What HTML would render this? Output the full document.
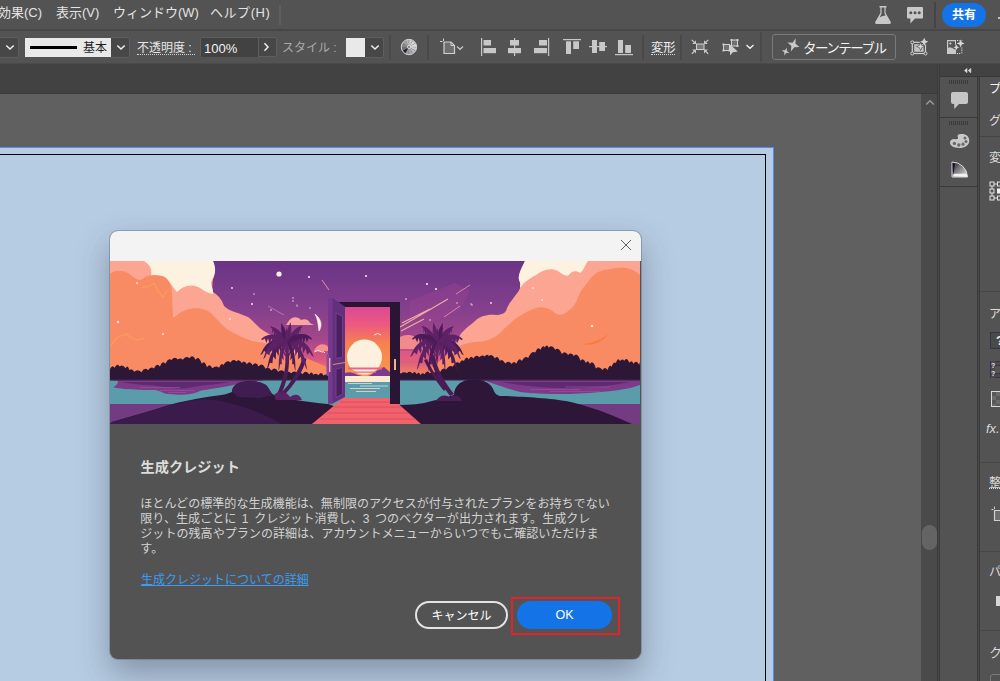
<!DOCTYPE html>
<html lang="ja">
<head>
<meta charset="utf-8">
<title>Illustrator</title>
<style>
html,body{margin:0;padding:0;}
body{width:1000px;height:681px;overflow:hidden;position:relative;background:#535353;
 font-family:"Liberation Sans","Noto Sans CJK JP",sans-serif;color:#e6e6e6;}
.abs{position:absolute;}
#root{position:absolute;left:0;top:0;width:1000px;height:681px;overflow:hidden;background:#535353;}
/* menu bar */
.menu{position:absolute;top:1.5px;height:22px;line-height:22px;font-size:13px;color:#e4e4e4;white-space:nowrap;}
.vsep{position:absolute;width:2px;margin-left:-1px;background:#494949;}
/* control bar */
.ddbtn{position:absolute;top:37px;height:18.5px;background:#474747;border:1px solid #5e5e5e;box-sizing:content-box;border-radius:0 2px 2px 0;}
.lbl{position:absolute;white-space:nowrap;font-size:12px;line-height:16px;}
.ic{position:absolute;overflow:visible;}
/* dialog */
#dlg{position:absolute;left:110px;top:231px;width:531px;height:428px;border-radius:8px;background:#535353;
 box-shadow:0 0 0 1px rgba(90,100,115,.4),0 14px 32px 0 rgba(45,50,60,.37);overflow:hidden;}
#dlg .tb{position:absolute;left:0;top:0;width:531px;height:30px;background:#f3f3f3;}
#dlg .img{position:absolute;left:0;top:30px;width:530px;height:163px;}
#dlg h1{position:absolute;left:30.5px;top:227px;margin:0;font-size:14.2px;line-height:18px;font-weight:bold;color:#dcdcdc;white-space:nowrap;}
#dlg p{position:absolute;left:30.3px;top:266px;margin:0;font-size:12.07px;line-height:15px;color:#d2d2d2;white-space:nowrap;}
#dlg a{position:absolute;left:31px;top:340.5px;font-size:12px;line-height:16px;color:#3a9cf2;text-decoration:underline;white-space:nowrap;}
.btn{position:absolute;box-sizing:border-box;height:28px;border-radius:14px;text-align:center;font-size:13px;white-space:nowrap;}
</style>
</head>
<body>
<div id="root">

<!-- ===== MENU BAR ===== -->
<div class="menu" style="left:-2px;">効果(C)</div>
<div class="menu" style="left:56px;">表示(V)</div>
<div class="menu" style="left:113px;">ウィンドウ(W)</div>
<div class="menu" style="left:210px;letter-spacing:.55px;">ヘルプ(H)</div>
<div class="vsep" style="left:280px;top:5px;height:20px;background:#5e5e5e;"></div>
<div class="vsep" style="left:935px;top:2px;height:26px;background:#444;"></div>
<div class="abs" style="left:942px;top:3px;width:44px;height:24px;border-radius:12px;background:#1473e6;color:#fff;font-weight:bold;font-size:12px;line-height:24px;text-align:center;">共有</div>

<!-- flask -->
<svg class="ic" style="left:874px;top:5px;" width="18" height="20" viewBox="0 0 18 20">
 <path d="M5.5 1 H12.5 V2.6 H11.6 V8 L16.8 17 Q17.3 19 15.6 19 H2.4 Q0.7 19 1.2 17 L6.4 8 V2.6 H5.5 Z" fill="#c8c8c8"/>
 <path d="M7.6 2.6 H10.4 V8.4 L11.6 10.6 Q8.6 10.8 5.8 12.2 L7.6 8.4 Z" fill="#535353"/>
</svg>
<!-- chat -->
<svg class="ic" style="left:906px;top:6px;" width="18" height="19" viewBox="0 0 18 19">
 <path d="M2 1 H16 Q17 1 17 2 V11.6 Q17 12.6 16 12.6 H9 L4.4 17.6 V12.6 H2 Q1 12.6 1 11.6 V2 Q1 1 2 1 Z" fill="#c8c8c8"/>
 <g fill="#535353"><circle cx="4.8" cy="6.8" r="1.5"/><circle cx="9" cy="6.8" r="1.5"/><circle cx="13.2" cy="6.8" r="1.5"/></g>
</svg>
<div class="abs" style="left:998px;top:17px;width:3px;height:2px;background:#c0c0c0;"></div>
<!-- gen icons in control bar -->
<svg class="ic" style="left:905px;top:32px;" width="65" height="30" viewBox="905 32 65 30">
 <rect x="912.300" y="42.300" width="13.200" height="11.200" fill="none" stroke="#cfcfcf" stroke-width="1.200"/>
 <rect x="914.200" y="44.200" width="9.400" height="7.600" fill="#c2c2c2"/>
 <path d="M924.20 37.70 L925.42 40.58 L928.30 41.80 L925.42 43.02 L924.20 45.90 L922.98 43.02 L920.10 41.80 L922.98 40.58 Z" fill="#d6d6d6" stroke="#535353" stroke-width="1.200" paint-order="stroke"/>
 <path d="M920.60 43.20 L921.58 45.52 L923.90 46.50 L921.58 47.48 L920.60 49.80 L919.62 47.48 L917.30 46.50 L919.62 45.52 Z" fill="#d6d6d6" stroke="#535353" stroke-width="1.200" paint-order="stroke"/>
 <g fill="#535353" stroke="#cfcfcf" stroke-width="1"><circle cx="912.300" cy="42.300" r="1.500"/><circle cx="912.300" cy="53.500" r="1.500"/><circle cx="925.500" cy="53.500" r="1.500"/></g>
 <rect x="947" y="40" width="9" height="14" fill="#c8c8c8"/>
 <path d="M948.200 41.200 H955 V50 Q954.300 48.300 953 48.800 Q952.600 47.200 951.200 47.800 Q950.400 46.600 949.400 47.600 Q948.800 47.200 948.200 48 Z" fill="#555"/>
 <path d="M950.30 42.00 L950.78 43.12 L951.90 43.60 L950.78 44.08 L950.30 45.20 L949.82 44.08 L948.70 43.60 L949.82 43.12 Z" fill="#cfcfcf"/>
 <path d="M957 40.500 H963 M961.800 47.500 V54 M957 53.500 H961" fill="none" stroke="#dcdcdc" stroke-width="1.100" stroke-dasharray="1.100 1"/>
 <path d="M960.60 39.40 L961.79 42.21 L964.60 43.40 L961.79 44.59 L960.60 47.40 L959.41 44.59 L956.60 43.40 L959.41 42.21 Z" fill="#d8d8d8" stroke="#535353" stroke-width="1" paint-order="stroke"/>
 <path d="M956.40 44.40 L957.26 46.44 L959.30 47.30 L957.26 48.16 L956.40 50.20 L955.54 48.16 L953.50 47.30 L955.54 46.44 Z" fill="#d8d8d8" stroke="#535353" stroke-width="1" paint-order="stroke"/>
</svg>


<!-- separator menu / control -->
<div class="abs" style="left:0;top:29px;width:1000px;height:2px;background:#464646;"></div>

<!-- ===== CONTROL BAR ===== -->

<!-- left dropdown -->
<div class="ddbtn" style="left:-2px;width:19px;"></div>
<svg class="ic" style="left:5px;top:44px;" width="10" height="7" viewBox="0 0 10 7"><path d="M1.3 1.5 L5 5 L8.7 1.5" fill="none" stroke="#f0f0f0" stroke-width="1.5"/></svg>
<!-- stroke box -->
<div class="abs" style="left:25px;top:38px;width:86px;height:19px;background:#e9e9e9;"></div>
<div class="abs" style="left:30px;top:46px;width:47px;height:3px;background:#000;"></div>
<div class="lbl" style="left:83px;top:40px;font-size:12px;color:#1e1e1e;">基本</div>
<div class="ddbtn" style="left:111px;width:18px;border-left:none;"></div>
<svg class="ic" style="left:116px;top:44px;" width="10" height="7" viewBox="0 0 10 7"><path d="M1.3 1.5 L5 5 L8.7 1.5" fill="none" stroke="#f0f0f0" stroke-width="1.5"/></svg>
<!-- opacity -->
<div class="lbl" style="left:137px;top:40px;color:#e6e6e6;">不透明度 :</div>
<div class="abs" style="left:137px;top:54px;width:58px;height:0;border-top:1px dotted #d0d0d0;"></div>
<div class="abs" style="left:200px;top:37px;width:77px;height:20px;border:1px solid #5e5e5e;box-sizing:border-box;background:#474747;border-radius:2px;"></div>
<div class="abs" style="left:201px;top:38px;width:57px;height:19px;background:#424242;"></div>
<div class="abs" style="left:258px;top:38px;width:1px;height:19px;background:#5e5e5e;"></div>
<div class="lbl" style="left:204px;top:41px;color:#f2f2f2;font-size:13px;">100%</div>
<svg class="ic" style="left:263px;top:42px;" width="7" height="10" viewBox="0 0 7 10"><path d="M1.5 1.3 L5 5 L1.5 8.7" fill="none" stroke="#f0f0f0" stroke-width="1.5"/></svg>
<!-- style -->
<div class="lbl" style="left:282px;top:40px;color:#a9a9a9;">スタイル :</div>
<div class="abs" style="left:346px;top:38px;width:19px;height:19px;background:#e9e9e9;"></div>
<div class="ddbtn" style="left:365px;width:18px;border-left:none;"></div>
<svg class="ic" style="left:370px;top:44px;" width="10" height="7" viewBox="0 0 10 7"><path d="M1.3 1.5 L5 5 L8.7 1.5" fill="none" stroke="#f0f0f0" stroke-width="1.5"/></svg>
<div class="vsep" style="left:390px;top:35px;height:25px;"></div>
<!-- recolor wheel -->
<svg class="ic" style="left:400px;top:38px;" width="18" height="18" viewBox="0 0 18 18">
 <circle cx="9" cy="9" r="7.800" fill="#6c6c6c"/>
 <path d="M9 9 L9.26 1.60 A7.4 7.4 0 0 1 12.47 2.47 Z" fill="#c9c9c9"/>
 <path d="M9 9 L12.92 2.72 A7.4 7.4 0 0 1 15.28 5.08 Z" fill="#d8d8d8"/>
 <path d="M9 9 L15.53 5.53 A7.4 7.4 0 0 1 16.40 8.74 Z" fill="#e0e0e0"/>
 <path d="M9 9 L16.40 9.26 A7.4 7.4 0 0 1 15.53 12.47 Z" fill="#cfcfcf"/>
 <path d="M9 9 L15.28 12.92 A7.4 7.4 0 0 1 12.92 15.28 Z" fill="#bdbdbd"/>
 <path d="M9 9 L12.47 15.53 A7.4 7.4 0 0 1 9.26 16.40 Z" fill="#a8a8a8"/>
 <path d="M9 9 L8.74 16.40 A7.4 7.4 0 0 1 5.53 15.53 Z" fill="#9a9a9a"/>
 <path d="M9 9 L5.08 15.28 A7.4 7.4 0 0 1 2.72 12.92 Z" fill="#2a1a38"/>
 <path d="M9 9 L2.47 12.47 A7.4 7.4 0 0 1 1.60 9.26 Z" fill="#707070"/>
 <path d="M9 9 L1.60 8.74 A7.4 7.4 0 0 1 2.47 5.53 Z" fill="#8a8a8a"/>
 <path d="M9 9 L2.72 5.08 A7.4 7.4 0 0 1 5.08 2.72 Z" fill="#a2a2a2"/>
 <path d="M9 9 L5.53 2.47 A7.4 7.4 0 0 1 8.74 1.60 Z" fill="#b6b6b6"/>
 <circle cx="9" cy="9" r="7.700" fill="none" stroke="#d2d2d2" stroke-width="1"/>
 <circle cx="9" cy="9" r="1.700" fill="#8a8a8a" stroke="#dedede" stroke-width=".8"/>
</svg>
<div class="vsep" style="left:428px;top:35px;height:25px;"></div>
<!-- artboard icon -->
<svg class="ic" style="left:439px;top:38px;" width="26" height="18" viewBox="0 0 26 18">
 <path d="M4.5 0.5 V3 M1 3.5 H3.5" stroke="#d0d0d0" stroke-width="1" fill="none"/>
 <path d="M5 4 H12 L15.5 7.5 V15.5 H5 Z" fill="#6e6e6e" stroke="#d0d0d0" stroke-width="1.2"/>
 <path d="M12 4 V7.5 H15.5" fill="none" stroke="#d0d0d0" stroke-width="1"/>
 <path d="M18 8.5 L21 11.3 L24 8.5" fill="none" stroke="#c8c8c8" stroke-width="1.3"/>
</svg>
<!-- align icons -->
<svg class="ic" style="left:480px;top:37px;" width="160" height="20" viewBox="480 37 160 20" fill="#c8c8c8">
 <rect x="481" y="38" width="1.2" height="18"/><rect x="483.5" y="40" width="7.5" height="5.5"/><rect x="483.5" y="48" width="12.5" height="5.2"/>
 <rect x="514" y="38" width="1.2" height="18"/><rect x="510" y="40" width="9" height="5.5"/><rect x="508" y="48" width="13" height="5.2"/>
 <rect x="548" y="38" width="1.2" height="18"/><rect x="539" y="40" width="8" height="5.5"/><rect x="534" y="48" width="13" height="5.2"/>
 <rect x="563" y="39" width="18" height="1.2"/><rect x="566" y="41.3" width="5" height="12.7"/><rect x="573.2" y="41.3" width="5.8" height="7.7"/>
 <rect x="589" y="46" width="18" height="1.2"/><rect x="592" y="40" width="5" height="13"/><rect x="599.2" y="42" width="5.8" height="9"/>
 <rect x="615" y="54" width="18" height="1.2"/><rect x="618" y="40" width="5" height="13"/><rect x="625.2" y="45" width="5.8" height="8"/>
</svg>
<div class="vsep" style="left:643px;top:35px;height:25px;"></div>
<div class="lbl" style="left:651px;top:40px;color:#f0f0f0;font-size:12.3px;">変形</div>
<div class="abs" style="left:651px;top:54px;width:24px;height:0;border-top:1px dotted #d8d8d8;"></div>
<div class="vsep" style="left:681px;top:35px;height:25px;"></div>
<!-- isolate icon -->
<svg class="ic" style="left:691px;top:39px;" width="18" height="16" viewBox="0 0 18 16">
 <rect x="5.500" y="5" width="7.500" height="5.500" fill="#7a7a7a" stroke="#d0d0d0" stroke-width="1"/>
 <g stroke="#c8c8c8" stroke-width="1.200" fill="#c8c8c8">
 <path d="M0.800 0.800 L3.600 3.600"/><path d="M5 1.200 V5 H1.200 Z" stroke="none"/>
 <path d="M17.200 0.800 L14.400 3.600"/><path d="M13 1.200 V5 H16.800 Z" stroke="none"/>
 <path d="M0.800 14.800 L3.600 12"/><path d="M5 14.400 V10.600 H1.200 Z" stroke="none"/>
 <path d="M17.200 14.800 L14.400 12"/><path d="M13 14.400 V10.600 H16.800 Z" stroke="none"/>
 </g>
</svg>
<!-- select similar -->
<svg class="ic" style="left:722px;top:38px;" width="34" height="18" viewBox="0 0 34 18">
 <rect x="9.5" y="2" width="6" height="6" fill="#707070" stroke="#d0d0d0" stroke-width="1"/>
 <rect x="1.5" y="6.5" width="6" height="6" fill="#707070" stroke="#d0d0d0" stroke-width="1"/>
 <g fill="#d0d0d0"><rect x="8.5" y="1" width="2" height="2"/><rect x="14.5" y="1" width="2" height="2"/><rect x="14.5" y="7" width="2" height="2"/><rect x=".5" y="5.5" width="2" height="2"/><rect x=".5" y="11.5" width="2" height="2"/><rect x="6.5" y="11.5" width="2" height="2"/></g>
 <path d="M8 6.5 L8 17.5 L10.8 14.2 L15.8 13.6 Z" fill="#cfcfcf"/>
 <path d="M24.5 7 L28 10.3 L31.5 7" fill="none" stroke="#f0f0f0" stroke-width="1.4"/>
</svg>
<div class="vsep" style="left:761px;top:32px;height:30px;"></div>
<!-- turntable button -->
<div class="abs" style="left:772px;top:34px;width:124px;height:26px;box-sizing:border-box;border:1px solid #7a7a7a;border-radius:3px;"></div>
<svg class="ic" style="left:781px;top:37px;" width="20" height="20" viewBox="0 0 20 20" fill="#c8c8c8">
 <path d="M12.5 1 L14 6.2 L18.8 8 L14 9.8 L12 15 L10.8 9.6 L6 7.6 L11 6.2 Z" transform="rotate(18 12.5 8)"/>
 <path d="M4.6 10.6 L5.6 13.6 L8.6 14.6 L5.6 15.7 L4.6 18.8 L3.6 15.7 L0.6 14.6 L3.6 13.6 Z" transform="rotate(18 4.6 14.6)"/>
</svg>
<div class="lbl" style="left:803px;top:40.5px;font-size:13.5px;letter-spacing:-1.5px;color:#f2f2f2;">ターンテーブル</div>


<!-- ===== dark band ===== -->
<div class="abs" style="left:0;top:64px;width:1000px;height:30px;background:#424242;"></div>
<div class="abs" style="left:0;top:63px;width:1000px;height:1px;background:#4a4a4a;"></div>

<!-- ===== CANVAS ===== -->
<div class="abs" id="canvas" style="left:0;top:94px;width:921px;height:587px;background:#606060;overflow:hidden;">
  <div class="abs" style="left:-10px;top:53px;width:782px;height:600px;background:#b6cce3;border:1px solid #5a86f0;"></div>
  <div class="abs" style="left:-10px;top:60px;width:774px;height:600px;border:1px solid #000;"></div>
</div>
<div class="abs" style="left:0;top:93px;width:937px;height:1px;background:#3a3a3a;"></div>
<!-- scrollbar -->
<div class="abs" style="left:921px;top:94px;width:16px;height:587px;background:#4a4a4a;"></div>
<div class="abs" style="left:922px;top:525px;width:15px;height:25px;border-radius:7.5px;background:#646464;"></div>
<svg class="ic" style="left:925px;top:99px;" width="10" height="7" viewBox="0 0 10 7"><path d="M1.2 5.6 L5 1.8 L8.8 5.6" fill="none" stroke="#9a9a9a" stroke-width="1.4"/></svg>

<!-- ===== RIGHT PANELS ===== -->

<div class="abs" style="left:937px;top:64px;width:63px;height:617px;background:#535353;"></div>
<div class="abs" style="left:937px;top:64px;width:3px;height:617px;background:#3b3b3b;"></div>
<div class="abs" style="left:938px;top:64px;width:1px;height:617px;background:#474747;"></div>
<div class="abs" style="left:940px;top:64px;width:60px;height:12px;background:#424242;"></div>
<div class="abs" style="left:940px;top:76px;width:60px;height:1px;background:#383838;"></div>
<svg class="ic" style="left:963px;top:67px;" width="10" height="7" viewBox="0 0 10 7"><path d="M4 1.4 L1.500 3.600 L4 5.800 Z M7.800 1.400 L5.300 3.600 L7.800 5.800 Z" fill="#dcdcdc" stroke="#dcdcdc" stroke-width=".6" stroke-linejoin="round"/></svg>
<!-- dock column separators -->
<div class="abs" style="left:977px;top:77px;width:3px;height:604px;background:#3b3b3b;"></div>
<div class="abs" style="left:978px;top:77px;width:1px;height:604px;background:#474747;"></div>
<div class="abs" style="left:940px;top:117px;width:37px;height:1px;background:#3a3a3a;"></div>
<div class="abs" style="left:940px;top:186px;width:37px;height:1px;background:#3a3a3a;"></div>
<!-- grippers -->
<div class="abs" style="left:949px;top:80px;width:20px;height:4px;background:repeating-linear-gradient(90deg,#3a3a3a 0,#3a3a3a 1px,transparent 1px,transparent 2px);"></div>
<div class="abs" style="left:949px;top:121px;width:20px;height:4px;background:repeating-linear-gradient(90deg,#3a3a3a 0,#3a3a3a 1px,transparent 1px,transparent 2px);"></div>
<!-- comment icon -->
<svg class="ic" style="left:950px;top:91px;" width="20" height="20" viewBox="0 0 20 20"><path d="M3 1 H16 Q18 1 18 3 V11 Q18 13 16 13 H9 L4.2 18 V13 H3 Q1 13 1 11 V3 Q1 1 3 1 Z" fill="#c6c6c6"/></svg>
<!-- palette icon -->
<svg class="ic" style="left:949px;top:133px;" width="22" height="16" viewBox="0 0 22 16">
 <path d="M11.5 1 C16.5 0.3 20.3 3.2 20.3 7.4 C20.3 12 16 15 10 15 C4.5 15 1 12.8 1 9.6 C1 7 3.2 5.8 6 6.2 C8.4 6.6 9.6 5.6 8.8 4 C8 2.4 9 1.3 11.5 1 Z" fill="#c8c8c8"/>
 <g fill="#6a6a6a"><circle cx="16" cy="5" r="1.5"/><circle cx="17" cy="8.6" r="1.5"/><circle cx="14" cy="11.2" r="1.6"/><circle cx="9.8" cy="12" r="1.7"/><circle cx="5.4" cy="10.4" r="1.7"/></g>
</svg>
<!-- color guide icon -->
<svg class="ic" style="left:951px;top:161px;" width="18" height="17" viewBox="0 0 18 17">
 <defs><linearGradient id="cg" x1="0" y1="0" x2="1" y2="1"><stop offset="0" stop-color="#1d0f2b"/><stop offset=".45" stop-color="#7a7a7a"/><stop offset="1" stop-color="#f0f0f0"/></linearGradient></defs>
 <path d="M1 1 A15.5 15.5 0 0 1 16.5 16 H1 Z" fill="url(#cg)" stroke="#dcdcdc" stroke-width="1"/>
 <path d="M1 16 L5 2 M1 16 L8.5 4 M1 16 L11.5 6.5 M1 16 L14 9.5 M1 16 L15.8 12.5" stroke="#999" stroke-width=".5" opacity=".6"/>
 <path d="M1.8 12.8 H15.4 L16.2 15.6 H1.8 Z" fill="#f2f2f2"/>
 <path d="M1.6 2 L4.2 3 L2 15 Z" fill="#1d0f2b"/>
</svg>
<!-- properties panel snippets -->
<div class="abs" style="left:980px;top:136px;width:20px;height:1px;background:#454545;"></div>
<div class="abs" style="left:980px;top:291px;width:20px;height:1px;background:#474747;"></div>
<div class="abs" style="left:980px;top:462px;width:20px;height:1px;background:#474747;"></div>
<div class="abs" style="left:980px;top:551px;width:20px;height:1px;background:#474747;"></div>
<div class="abs" style="left:980px;top:630px;width:20px;height:1px;background:#474747;"></div>
<div class="lbl" style="left:989px;top:81px;font-size:12px;color:#f4f4f4;">プロパティ</div>
<div class="lbl" style="left:989px;top:113px;font-size:12px;color:#dcdcdc;">グループ</div>
<div class="lbl" style="left:989px;top:150px;font-size:12px;color:#dcdcdc;">変形</div>
<svg class="ic" style="left:989px;top:181px;" width="11" height="20" viewBox="0 0 11 20"><g fill="#535353" stroke="#e4e4e4" stroke-width="1"><path d="M3 3 H14 M3 3 V17 M3 17 H14" fill="none"/><rect x="1" y="1" width="4" height="4"/><rect x="1" y="8" width="4" height="4"/><rect x="1" y="15" width="4" height="4"/><rect x="8.5" y="1" width="4" height="4"/><rect x="8.5" y="15" width="4" height="4"/></g><rect x="8" y="7.5" width="5" height="5" fill="#f0f0f0"/></svg>
<div class="lbl" style="left:989px;top:305.5px;font-size:12px;color:#dcdcdc;">アピアランス</div>
<div class="abs" style="left:990px;top:332px;width:18px;height:17px;box-sizing:border-box;border:1px solid #3a3048;background:#4a4a4a;"></div>
<div class="lbl" style="left:996px;top:333px;font-size:13px;font-weight:bold;color:#f0f0f0;">?</div>
<div class="abs" style="left:990px;top:361px;width:18px;height:17px;box-sizing:border-box;border:1px solid #3a3048;background:#4a4a4a;"></div>
<div class="abs" style="left:994px;top:365px;width:10px;height:9px;box-sizing:border-box;border:1px solid #3a3048;background:#535353;"></div>
<div class="lbl" style="left:991px;top:361px;font-size:7px;font-weight:bold;color:#e8e8e8;line-height:9px;background:#4a4a4a;">?</div><div class="lbl" style="left:991px;top:370px;font-size:7px;font-weight:bold;color:#e8e8e8;line-height:8px;background:#4a4a4a;">?</div>
<div class="abs" style="left:991px;top:391px;width:16px;height:16px;box-sizing:border-box;border:1px solid #d8d8d8;background:repeating-conic-gradient(#6a6a6a 0 25%,#585858 0 50%) 0 0/8px 8px;"></div>
<div class="lbl" style="left:986px;top:421px;font-size:13px;font-style:italic;color:#d8d8d8;">fx.</div>
<div class="lbl" style="left:989px;top:475px;font-size:12px;color:#dcdcdc;text-decoration:underline dotted;">整列</div>
<svg class="ic" style="left:991px;top:506px;" width="9" height="16" viewBox="0 0 9 16"><path d="M3.5 0.5 V3 M0.5 3.5 H2.6" stroke="#d0d0d0" stroke-width="1" fill="none"/><path d="M3.5 4.5 H12 V14.5 H3.5 Z" fill="#6e6e6e" stroke="#d0d0d0" stroke-width="1.2"/></svg>
<div class="lbl" style="left:989px;top:564px;font-size:12px;color:#dcdcdc;">パスファインダー</div>
<div class="abs" style="left:996px;top:596px;width:6px;height:10px;background:#d6d6d6;"></div>
<div class="lbl" style="left:989px;top:645px;font-size:13px;color:#dcdcdc;">クイック操作</div>
<div class="abs" style="left:990px;top:674px;width:30px;height:20px;box-sizing:border-box;border:1px solid #7a7a7a;border-radius:3px;"></div>


<!-- ===== DIALOG ===== -->
<div id="dlg">
  <div class="tb"></div>
  <svg class="abs" style="left:509px;top:7px;" width="14" height="14" viewBox="0 0 14 14"><path d="M2 2 L12 12 M12 2 L2 12" stroke="#5e5e5e" stroke-width="1" fill="none"/></svg>
  <div class="img"><!-- ILLUS-START --><svg width="530" height="163" viewBox="0 0 530 163" style="display:block">
<defs>
<linearGradient id="sky" x1="0" y1="0" x2="0" y2="1">
 <stop offset="0" stop-color="#6a3386"/><stop offset=".3" stop-color="#84408c"/><stop offset=".48" stop-color="#a5468a"/><stop offset=".6" stop-color="#d75682"/><stop offset=".7" stop-color="#f4835f"/><stop offset="1" stop-color="#f4835f"/>
</linearGradient>
<linearGradient id="dsky" x1="0" y1="0" x2="0" y2="1">
 <stop offset="0" stop-color="#dd4895"/><stop offset=".2" stop-color="#ec5a80"/><stop offset=".4" stop-color="#f7814f"/><stop offset=".75" stop-color="#f9984c"/><stop offset="1" stop-color="#f9984c"/>
</linearGradient>
</defs>
<rect width="530" height="163" fill="url(#sky)"/>
<!-- faint purple haze shapes -->
<path d="M300 40 L345 22 L360 30 L350 50 L300 70 Z" fill="#9a4290" opacity=".45"/>
<!-- left pink cloud -->
<path d="M0 0 H103 L105 10 C104 16 101 22 103 31 C109 35 112 39 114 45 C120 51 130 52 138 56 C144 60 147 66 154 70 C160 74 170 78 178 84 L205 104 H0 Z" fill="#fba592"/>
<!-- left cream -->
<path d="M34 0 H103 C106 6 106 13 102 19 C99 23 104 28 103 33 C96 32 92 28 88 26 C80 23 73 25 67 31 C62 26 60 20 55 16 C50 14 44 15 40 17 C43 11 41 4 34 0 Z" fill="#fdf1df"/>
<!-- left orange -->
<path d="M0 13 C5 9 12 9 18 12 C22 14 25 19 31 19 C36 14 44 13 52 15 C58 17 62 24 62 32 L63 57 C66 55 70 51 76 49 C84 46 96 47 102 53 C108 59 114 68 124 72 C130 75 136 78 142 80 L165 84 L222 108 V122 H0 Z" fill="#f98b64"/>
<!-- right pink -->
<path d="M530 0 H415 C411 8 408 14 409 19 C411 24 411 27 408 31 C403 38 399 42 397 47 C396 52 392 54 386 54 C378 53 370 55 365 60 C358 66 352 70 349 76 C346 84 340 92 332 100 L320 112 H530 Z" fill="#fba592"/>
<!-- right cream -->
<path d="M478 0 H415 C411 8 408 14 409 19 C411 22 410 25 410 27 C414 21 420 17 426 14 C432 9 440 6 448 10 C452 13 456 16 459 14 C461 10 466 9 470 12 C474 9 475 4 478 0 Z" fill="#fdf1df"/>
<!-- right orange -->
<path d="M530 14 C524 8 516 6 508 7 C502 8 496 8 491 10 C485 12 481 16 478 21 C474 26 470 30 468 36 C466 42 464 46 458 50 C454 54 449 55 445 52 C440 47 432 45 426 47 C420 49 414 52 408 56 C402 60 396 66 390 72 C384 78 374 81 364 81 C356 82 350 84 344 88 L320 108 V122 H530 Z" fill="#f98b64"/>
<!-- orange squiggles -->
<path d="M31 27 L40 25 L44 22 L48 30 L53 36 L57 30" fill="none" stroke="#f9a45a" stroke-width="1.2" opacity=".8"/>
<path d="M1 84 L8 76 L16 73 L22 77 L28 79 L34 77" fill="none" stroke="#f9a45a" stroke-width="1.2" opacity=".7"/>
<path d="M473 83 C482 82 492 78 499 73 C494 80 482 86 473 83 Z" fill="#f77e3e"/>
<!-- small clouds -->
<path d="M178 61 C181 55 188 55 191 59 C195 57 199 59 200 62 L204 64 H176 Z" fill="#f7a5a0"/>
<path d="M205 88 C208 82 216 82 218 86 V90 H204 Z" fill="#f7908a"/>
<path d="M290 76 C296 72 306 74 312 80 C318 82 322 84 326 88 H290 Z" fill="#f28a8c"/>
<path d="M290 90 H330 V100 H290 Z" fill="#e8607e" opacity=".6"/>
<!-- stars -->
<g fill="#fbe3ea">
<circle cx="169" cy="13" r="2.6" fill="#fdf0e6"/>
<circle cx="27" cy="22" r="1"/><circle cx="8" cy="61" r="1.2"/><circle cx="53" cy="73" r="1.1"/><circle cx="120" cy="58" r="1.1"/><circle cx="122" cy="27" r=".9"/><circle cx="142" cy="43" r="1"/><circle cx="161" cy="49" r=".8"/><circle cx="144" cy="33" r=".7"/><circle cx="183" cy="37" r=".7"/><circle cx="187" cy="44" r=".6"/>
<circle cx="199" cy="16" r="1.1"/><circle cx="256" cy="15" r="1.1"/><circle cx="317" cy="23" r="1.1"/><circle cx="326" cy="28" r="1.1"/><circle cx="296" cy="38" r=".8"/><circle cx="347" cy="42" r=".7"/><circle cx="320" cy="59" r=".7"/><circle cx="362" cy="44" r=".7"/><circle cx="183" cy="40" r=".7"/><circle cx="200" cy="47" r=".7"/><circle cx="187" cy="45" r=".6"/>
<circle cx="423" cy="27" r="1"/><circle cx="432" cy="39" r="1"/><circle cx="482" cy="65" r="1.3"/><circle cx="381" cy="42" r=".9"/><circle cx="361" cy="43" r=".7"/>
</g>
<!-- shooting stars -->
<path d="M212 19 L219 29" stroke="#f08aa0" stroke-width="1"/>
<path d="M158 45 L174 54" stroke="#c87ab0" stroke-width=".8"/>
<path d="M290 66 L338 38 M292 62 L320 48 M291 70 L314 58" stroke="#f5b9a0" stroke-width="1.3" opacity=".9"/>
<path d="M334 56 L350 45 M346 33 L360 24" stroke="#e58aa0" stroke-width=".9"/>
<!-- crescent -->
<path d="M205 53 C211 58 213 64 209 70 C208 64 208 58 205 53 Z" fill="#fdeee0" stroke="#fdeee0" stroke-width=".6"/>
<!-- birds -->
<path d="M204 91 Q208 88 212 91 Q214 90 215 92" fill="none" stroke="#fdeee6" stroke-width=".9"/>
<!-- tree lines -->
<path d="M0.0 108.0 Q2.3 103.1 4.6 106.7 Q7.2 101.5 9.7 105.4 Q12.7 103.1 15.6 107.3 Q17.6 102.8 19.5 109.3 Q21.9 106.5 24.2 110.8 Q27.8 107.4 31.4 111.2 Q34.7 105.7 38.0 109.2 Q40.9 104.9 43.9 107.4 Q46.9 101.0 49.9 105.6 Q52.7 98.6 55.4 102.8 Q58.5 96.7 61.5 99.0 Q64.7 94.8 67.9 98.6 Q70.3 96.4 72.7 98.7 Q76.1 93.9 79.4 97.3 Q82.5 92.7 85.6 98.7 Q88.7 94.0 91.8 102.8 Q94.4 98.5 97.0 106.3 Q99.7 101.6 102.3 107.2 Q105.7 104.3 109.1 106.7 Q111.2 101.3 113.4 104.0 Q116.9 98.0 120.4 101.4 Q123.4 97.4 126.3 100.4 Q129.1 97.2 131.8 102.1 Q134.3 98.3 136.8 103.3 Q139.7 98.6 142.6 104.3 Q145.7 99.5 148.7 105.6 Q152.1 100.7 155.4 107.8 Q158.4 105.2 161.5 109.5 Q164.8 104.7 168.2 110.8 Q171.6 107.1 175.0 111.6 Q178.1 108.9 181.2 112.2 Q184.5 108.4 187.8 112.8 Q190.2 110.5 192.6 113.2 Q195.9 108.3 199.3 113.6 Q201.3 109.2 203.4 113.8 Q206.0 111.3 208.6 114.2 Q211.0 109.9 213.4 114.5 Q216.8 112.2 220.1 114.9 Q221.1 112.6 222.0 115.0 V119 H0.0 Z" fill="#2c1836"/>
<path d="M286.0 113.0 Q288.5 110.1 290.9 112.6 Q293.9 109.9 296.9 112.2 Q299.7 109.1 302.5 112.5 Q304.6 109.0 306.6 113.3 Q308.6 110.0 310.6 113.9 Q312.6 110.9 314.6 113.3 Q317.3 108.1 319.9 112.5 Q322.0 109.1 324.1 111.9 Q327.1 106.2 330.1 111.0 Q332.9 105.4 335.8 108.7 Q339.4 103.3 342.9 105.6 Q346.2 99.3 349.6 102.2 Q351.7 97.6 353.9 100.1 Q356.3 94.0 358.8 98.4 Q361.0 93.7 363.2 97.5 Q366.2 93.0 369.2 96.2 Q372.0 93.2 374.8 95.5 Q376.8 92.4 378.9 95.1 Q381.9 91.8 385.0 97.5 Q387.4 93.7 389.9 99.9 Q392.5 97.0 395.2 102.6 Q398.4 98.5 401.7 103.0 Q404.0 99.1 406.3 102.8 Q409.1 95.5 411.9 100.0 Q415.0 94.0 418.2 96.9 Q421.7 89.1 425.3 91.6 Q427.9 84.5 430.5 88.8 Q432.7 83.1 434.8 86.6 Q436.8 82.6 438.8 86.7 Q442.0 83.0 445.2 88.7 Q448.6 85.7 451.9 93.0 Q455.0 89.2 458.1 94.0 Q461.0 90.6 463.8 95.0 Q467.1 90.2 470.5 99.8 Q473.2 95.9 475.9 102.0 Q477.9 97.9 479.9 103.0 Q482.9 98.1 485.9 107.4 Q489.2 104.5 492.5 109.0 Q495.0 105.0 497.6 109.0 Q499.6 102.5 501.5 105.9 Q503.7 99.6 505.9 102.1 Q507.9 95.7 510.0 100.0 Q512.1 97.0 514.2 99.8 Q516.8 95.3 519.4 101.8 Q521.4 98.4 523.5 102.7 Q526.3 98.1 529.2 103.8 Q529.6 99.3 530.0 104.0 V120 H286.0 Z" fill="#2c1836"/>
<!-- water -->
<rect x="0" y="118" width="530" height="26" fill="#5b9cab"/>
<path d="M0 118 H160 C150 120 140 121 133 121.500 C124 124 116 126 107 127 C100 128 96 129 91 129.500 C86 132 80 133.500 75 133.500 C68 134 60 133.500 55 132.500 C50 130 48 129.500 45 129 C34 129 24 128.500 15 128 C10 127.500 6 127 3 126 L0 124 Z" fill="#7d3a88"/>
<path d="M12 121 H120 C110 123 100 124 92 124.500 C84 126 76 127.500 70 127.500 C60 127 50 125.500 44 124.500 C32 124 20 123 12 121 Z" fill="#5e2a72"/>
<path d="M30 126.500 H70 M50 129.500 H84 M58 131.500 H76" stroke="#9a4a98" stroke-width=".8" fill="none"/>
<path d="M0 119 L8 120 C8 124 4 126.500 0 127 Z" fill="#5b9cab"/>
<path d="M0 118 H222 V119.500 H0 Z" fill="#3a1c48"/>
<path d="M330 118 H530 V124 C522 127 510 129.500 490 131 C476 132.500 462 133 450 133 C436 133 422 132.500 410 131 C398 128 388 124 376 120 Z" fill="#7d3a88"/>
<path d="M390 121 H520 C505 124 490 126 470 127 C450 127.500 430 126.500 414 124.500 Z" fill="#5e2a72"/>
<path d="M420 128.500 H470 M440 130.500 H490 M455 126 H500" stroke="#9a4a98" stroke-width=".8" fill="none"/>
<path d="M286 118 H530 V119.500 H286 Z" fill="#3a1c48"/>
<!-- purple shore band -->
<path d="M0 143 H120 V163 H0 Z" fill="#733b82"/>
<path d="M530 143 H400 V163 H530 Z" fill="#733b82"/>
<!-- left land -->
<path d="M0 163 L2 161 C20 156 40 150 56 145 C72 140 90 137 104 135 C112 134 118 133 122 131 C122 126 126 122 132 121 C140 119 150 120 156 124 C160 128 160 132 164 134 C176 138 196 141 218 143 L240 150 L202 163 Z" fill="#2e1638"/>
<path d="M0 163 L2 161 C20 156 40 150 56 145 C72 141 84 139 96 138 C120 140 150 150 172 163 Z" fill="#3b1a4c"/>
<path d="M122 131 C122 126 126 122 132 121 C140 119 150 120 156 124 C160 128 160 132 164 134 L150 137 L128 136 Z" fill="#3f1d50"/>
<!-- right land -->
<path d="M288 144 C300 144 312 143 322 140 C330 138 338 136 344 134 C344 126 350 120 358 119 C368 117 380 120 383 128 C385 132 386 134 390 135 C404 135 440 137 456 140 C474 144 492 150 506 156 L522 163 H300 Z" fill="#2e1638"/>
<!-- deck -->
<path d="M235 135.500 H280 L311 163 H202 Z" fill="#f2626c"/>
<path d="M230 141 H286 M224 146 H292 M217 152 H298 M210 158 H305" stroke="#d8485c" stroke-width=".8" fill="none"/>
<!-- door interior -->
<rect x="235" y="46" width="46" height="91" fill="url(#dsky)"/>
<circle cx="254.500" cy="96" r="17.500" fill="#fdf0dc"/>
<path d="M235 112 C240 110 244 112 248 114 L256 116 C262 114 268 108 274 106 L281 112 V116 H235 Z" fill="#7b3c8c"/>
<path d="M238 106.500 H272 V108.500 H238 Z M244 110.500 H266 V111.700 H244 Z" fill="#f0628a"/>
<rect x="235" y="115" width="46" height="22" fill="#5b9cab"/>
<rect x="235" y="115" width="46" height="6" fill="#fce9d4"/>
<path d="M238 122.500 H262 M250 125 H278 M240 127.500 H270 M246 130.500 H266" stroke="#e6dccc" stroke-width="1" opacity=".85"/>
<path d="M264 74 Q268 71 271 74" fill="none" stroke="#fdeee6" stroke-width=".9"/>
<!-- door frame -->
<path d="M224 41 H290 V143 H280 V46 H224 Z" fill="#2a1534"/>
<rect x="284" y="98" width="2" height="11" fill="#f4b08a"/>
<!-- door leaf -->
<path d="M218 37 L222.500 37 L235 45.500 V136 L222.500 142.500 H218 Z" fill="#62307c"/>
<path d="M218 37 L222.500 37 V142.500 H218 Z" fill="#74398c"/>
<path d="M226 52 L232.500 55.500 V96 L226 97.500 Z M226 108 L232.500 106.500 V133 L226 136.500 Z" fill="#4a2060" stroke="#8a4a9c" stroke-width=".6"/>
<path d="M223 103.500 L235 101.500" stroke="#e8b070" stroke-width=".8"/>
<rect x="216.500" y="93" width="2.600" height="22" rx="1" fill="#8c4a98"/>
<rect x="219" y="97" width="1.400" height="14" fill="#f0a8b0"/>
<!-- palms -->
<path d="M175.500 92 C176 104 174.500 118 166 135 L170 136 C178 120 179.500 106 179 92 Z M193 96 C190 106 182 122 169 134 L172 136 C185 124 193 110 196.500 98 Z" fill="#4a1b55"/>
<path d="M177.0 82.0 L175.2 80.4 L173.1 79.3 L170.9 78.6 L168.7 78.3 L166.4 78.3 L164.2 78.8 L162.0 79.6 L159.9 80.8 L157.9 82.3 L156.1 84.1 L154.4 86.2 L152.9 88.6 L151.6 91.4 L150.1 94.2 L150.1 94.2 L152.3 92.9 L154.2 89.7 L157.0 92.4 L158.1 86.4 L160.9 91.5 L161.8 84.0 L164.2 90.4 L165.3 82.4 L167.3 89.0 L168.8 81.6 L170.6 87.0 L172.6 81.5 L174.5 84.4 L177.0 82.0 Z" fill="#4b1b57"/>
<path d="M177.0 82.0 L175.4 79.9 L173.6 78.3 L171.7 76.9 L169.7 75.7 L167.7 74.8 L165.7 74.2 L163.6 73.8 L161.6 73.6 L159.6 73.8 L157.6 74.2 L155.8 74.9 L154.0 75.8 L152.5 77.1 L150.9 78.3 L150.9 78.3 L152.8 78.9 L154.6 77.5 L156.6 82.0 L158.0 77.2 L159.8 83.9 L161.4 77.4 L162.9 85.0 L164.8 77.9 L166.2 85.3 L168.5 78.9 L169.9 84.9 L172.5 80.3 L174.3 83.7 L177.0 82.0 Z" fill="#5c2265"/>
<path d="M177.0 82.0 L176.3 79.9 L175.3 78.0 L174.3 76.2 L173.2 74.5 L172.1 73.0 L170.9 71.6 L169.7 70.3 L168.4 69.1 L167.1 68.1 L165.8 67.2 L164.4 66.5 L163.0 65.9 L161.6 65.5 L160.3 65.1 L160.3 65.1 L161.1 67.1 L162.1 67.2 L162.4 72.4 L164.0 69.4 L164.1 76.3 L166.0 71.6 L166.1 79.3 L168.3 74.0 L168.5 81.3 L170.9 76.6 L171.4 82.6 L173.7 79.3 L174.8 82.9 L177.0 82.0 Z" fill="#5c2265"/>
<path d="M177.0 82.0 L177.2 80.2 L177.2 78.6 L177.0 76.9 L176.8 75.4 L176.6 73.8 L176.2 72.3 L175.8 70.9 L175.3 69.5 L174.8 68.1 L174.2 66.8 L173.5 65.5 L172.8 64.2 L171.9 63.0 L171.2 61.8 L171.2 61.8 L171.1 64.1 L171.4 64.6 L170.7 69.4 L171.7 67.5 L170.8 73.7 L172.3 70.3 L171.3 77.1 L173.1 73.2 L172.3 79.7 L174.1 76.1 L173.7 81.6 L175.3 79.1 L175.6 82.5 L177.0 82.0 Z" fill="#4b1b57"/>
<path d="M177.0 82.0 L176.6 80.3 L176.5 78.6 L176.4 77.0 L176.5 75.4 L176.6 73.8 L176.8 72.3 L177.0 70.8 L177.3 69.4 L177.7 67.9 L178.2 66.5 L178.7 65.2 L179.3 63.9 L180.1 62.6 L180.6 61.3 L180.6 61.3 L180.9 63.6 L180.8 64.1 L181.6 68.8 L180.7 67.0 L181.9 73.1 L180.5 69.9 L181.6 76.6 L180.0 72.9 L180.9 79.3 L179.3 75.9 L179.8 81.2 L178.3 78.9 L178.3 82.3 L177.0 82.0 Z" fill="#5c2265"/>
<path d="M177.0 82.0 L177.6 79.8 L178.4 77.8 L179.3 75.9 L180.2 74.2 L181.3 72.6 L182.3 71.2 L183.5 69.9 L184.6 68.7 L185.9 67.7 L187.1 66.8 L188.4 66.1 L189.7 65.6 L191.1 65.3 L192.3 65.0 L192.3 65.0 L191.6 66.9 L190.7 66.8 L190.5 72.0 L189.0 68.9 L189.0 75.8 L187.2 71.1 L187.3 78.6 L185.1 73.5 L185.0 80.8 L182.7 76.1 L182.3 82.2 L180.1 79.0 L179.1 82.7 L177.0 82.0 Z" fill="#5c2265"/>
<path d="M177.0 82.0 L178.5 79.8 L180.2 78.1 L182.1 76.6 L184.0 75.3 L185.9 74.3 L187.9 73.6 L190.0 73.1 L192.0 73.0 L194.0 73.1 L195.9 73.6 L197.7 74.3 L199.4 75.3 L200.9 76.7 L202.4 77.9 L202.4 77.9 L200.5 78.5 L198.8 76.9 L196.8 81.4 L195.4 76.6 L193.7 83.3 L192.2 76.7 L190.8 84.4 L188.9 77.3 L187.7 84.8 L185.3 78.4 L184.0 84.5 L181.4 80.0 L179.7 83.6 L177.0 82.0 Z" fill="#4b1b57"/>
<path d="M177.0 82.0 L178.9 80.4 L180.9 79.4 L183.1 78.7 L185.4 78.5 L187.7 78.7 L190.0 79.2 L192.2 80.2 L194.3 81.5 L196.2 83.2 L198.1 85.2 L199.7 87.5 L201.2 90.2 L202.5 93.1 L203.9 96.1 L203.9 96.1 L201.7 94.6 L199.8 91.2 L197.0 93.5 L195.9 87.4 L193.1 92.2 L192.2 84.7 L189.6 90.9 L188.6 82.9 L186.6 89.3 L185.1 81.8 L183.4 87.1 L181.4 81.6 L179.5 84.4 L177.0 82.0 Z" fill="#5c2265"/>
<path d="M177.0 82.0 L178.6 81.1 L180.4 80.9 L182.3 81.1 L184.2 81.8 L186.1 83.0 L187.8 84.6 L189.4 86.5 L190.9 88.8 L192.2 91.4 L193.5 94.3 L194.6 97.6 L195.6 101.2 L196.4 105.1 L197.4 109.2 L197.4 109.2 L195.6 106.3 L194.1 101.7 L191.6 102.3 L190.9 95.5 L188.2 98.4 L187.9 90.6 L185.3 94.9 L185.1 87.0 L182.9 91.8 L182.5 84.4 L180.8 88.6 L180.0 82.9 L178.6 84.9 L177.0 82.0 Z" fill="#5c2265"/>
<path d="M177.0 82.0 L175.4 81.1 L173.6 80.9 L171.7 81.1 L169.8 81.8 L167.9 83.0 L166.2 84.6 L164.6 86.5 L163.1 88.8 L161.8 91.4 L160.5 94.3 L159.4 97.6 L158.4 101.2 L157.6 105.1 L156.6 109.2 L156.6 109.2 L158.4 106.3 L159.9 101.7 L162.4 102.3 L163.1 95.5 L165.8 98.4 L166.1 90.6 L168.7 94.9 L168.9 87.0 L171.1 91.8 L171.5 84.4 L173.2 88.6 L174.0 82.9 L175.4 84.9 L177.0 82.0 Z" fill="#4b1b57"/>
<path d="M177.0 82.0 L175.4 80.4 L173.6 79.3 L171.5 78.6 L169.4 78.4 L167.3 78.7 L165.2 79.4 L163.2 80.6 L161.3 82.1 L159.6 84.0 L158.0 86.3 L156.6 88.8 L155.3 91.7 L154.3 94.9 L153.1 98.3 L153.1 98.3 L155.1 96.4 L156.8 92.6 L159.5 94.5 L160.4 88.2 L163.2 92.6 L163.8 85.0 L166.3 91.0 L166.9 82.9 L168.8 89.2 L169.8 81.8 L171.3 87.0 L173.1 81.5 L174.7 84.3 L177.0 82.0 Z" fill="#5c2265"/>
<path d="M177.0 82.0 L177.5 80.8 L177.8 79.6 L178.0 78.5 L178.2 77.4 L178.3 76.2 L178.3 75.2 L178.3 74.1 L178.2 73.0 L178.1 72.0 L177.9 70.9 L177.6 69.9 L177.2 68.9 L176.8 68.0 L176.5 67.0 L176.5 67.0 L176.1 68.7 L176.1 69.0 L175.2 72.6 L175.7 71.0 L174.6 75.7 L175.6 73.1 L174.5 78.2 L175.6 75.2 L174.7 80.2 L175.9 77.4 L175.2 81.6 L176.3 79.7 L176.1 82.3 L177.0 82.0 Z" fill="#5c2265"/>
<path d="M177.0 82.0 L178.0 81.7 L179.1 82.1 L180.2 82.9 L181.1 84.0 L181.9 85.4 L182.7 87.1 L183.4 89.1 L183.9 91.3 L184.4 93.8 L184.8 96.6 L185.1 99.6 L185.3 102.9 L185.4 106.5 L185.6 110.3 L185.6 110.3 L184.6 107.4 L183.9 103.2 L182.2 103.3 L182.3 97.1 L180.3 99.2 L180.8 92.1 L178.9 95.4 L179.6 88.2 L177.9 91.8 L178.6 85.3 L177.3 88.5 L177.8 83.4 L177.1 84.9 L177.0 82.0 Z" fill="#4b1b57"/>
<path d="M177.0 82.0 L176.0 81.7 L174.9 82.1 L173.8 82.9 L172.9 84.0 L172.1 85.4 L171.3 87.1 L170.6 89.1 L170.1 91.3 L169.6 93.8 L169.2 96.6 L168.9 99.6 L168.7 102.9 L168.6 106.5 L168.4 110.3 L168.4 110.3 L169.4 107.4 L170.1 103.2 L171.8 103.3 L171.7 97.1 L173.7 99.2 L173.2 92.1 L175.1 95.4 L174.4 88.2 L176.1 91.8 L175.4 85.3 L176.7 88.5 L176.2 83.4 L176.9 84.9 L177.0 82.0 Z" fill="#5c2265"/>
<path d="M177.0 82.0 L176.3 80.5 L175.4 79.3 L174.5 78.2 L173.5 77.2 L172.5 76.3 L171.5 75.5 L170.4 74.9 L169.3 74.4 L168.2 74.0 L167.1 73.7 L166.0 73.6 L164.9 73.6 L163.8 73.8 L162.8 73.9 L162.8 73.9 L163.6 75.3 L164.5 74.8 L165.1 79.0 L166.2 75.9 L166.6 81.4 L168.0 76.9 L168.3 83.1 L169.9 78.1 L170.3 83.9 L172.0 79.3 L172.6 84.0 L174.3 80.6 L175.3 83.3 L177.0 82.0 Z" fill="#5c2265"/>
<path d="M177.0 82.0 L177.6 80.5 L178.5 79.2 L179.4 78.0 L180.3 77.0 L181.3 76.1 L182.3 75.3 L183.4 74.7 L184.5 74.2 L185.6 73.9 L186.7 73.7 L187.8 73.6 L188.9 73.8 L189.9 74.1 L190.8 74.4 L190.8 74.4 L189.9 75.6 L189.1 75.1 L188.4 79.1 L187.4 75.9 L187.0 81.4 L185.7 76.8 L185.4 82.9 L183.9 77.9 L183.6 83.7 L181.9 79.1 L181.4 83.8 L179.6 80.5 L178.7 83.2 L177.0 82.0 Z" fill="#4b1b57"/>
<path d="M177.0 82.0 L177.6 82.2 L178.0 82.6 L178.3 83.3 L178.5 84.2 L178.7 85.3 L178.7 86.7 L178.7 88.3 L178.7 90.1 L178.6 92.2 L178.4 94.5 L178.1 97.0 L177.8 99.8 L177.3 102.8 L177.0 106.0 L177.0 106.0 L176.6 103.5 L176.5 99.8 L175.4 99.9 L176.0 94.5 L174.8 96.2 L175.8 90.1 L174.5 92.8 L175.8 86.7 L174.6 89.6 L175.9 84.2 L175.2 86.6 L176.3 82.6 L176.1 83.8 L177.0 82.0 Z" fill="#5c2265"/>
<path d="M320.500 95 C322 108 330 122 340 135 L344 133 C334 120 327 108 324.500 94 Z M314 99 C318 108 326 120 334 130 L336 128 C328 118 321 108 317 98 Z" fill="#4a1b55"/>
<path d="M327.0 82.0 L328.8 80.4 L330.9 79.3 L333.1 78.6 L335.3 78.3 L337.6 78.3 L339.8 78.8 L342.0 79.6 L344.1 80.8 L346.1 82.3 L347.9 84.1 L349.6 86.2 L351.1 88.6 L352.4 91.4 L353.9 94.2 L353.9 94.2 L351.7 92.9 L349.8 89.7 L347.0 92.4 L345.9 86.4 L343.1 91.5 L342.2 84.0 L339.8 90.4 L338.7 82.4 L336.7 89.0 L335.2 81.6 L333.4 87.0 L331.4 81.5 L329.5 84.4 L327.0 82.0 Z" fill="#4b1b57"/>
<path d="M327.0 82.0 L328.6 79.9 L330.4 78.3 L332.3 76.9 L334.3 75.7 L336.3 74.8 L338.3 74.2 L340.4 73.8 L342.4 73.6 L344.4 73.8 L346.4 74.2 L348.2 74.9 L350.0 75.8 L351.5 77.1 L353.1 78.3 L353.1 78.3 L351.2 78.9 L349.4 77.5 L347.4 82.0 L346.0 77.2 L344.2 83.9 L342.6 77.4 L341.1 85.0 L339.2 77.9 L337.8 85.3 L335.5 78.9 L334.1 84.9 L331.5 80.3 L329.7 83.7 L327.0 82.0 Z" fill="#5c2265"/>
<path d="M327.0 82.0 L327.7 79.9 L328.7 78.0 L329.7 76.2 L330.8 74.5 L331.9 73.0 L333.1 71.6 L334.3 70.3 L335.6 69.1 L336.9 68.1 L338.2 67.2 L339.6 66.5 L341.0 65.9 L342.4 65.5 L343.7 65.1 L343.7 65.1 L342.9 67.1 L341.9 67.2 L341.6 72.4 L340.0 69.4 L339.9 76.3 L338.0 71.6 L337.9 79.3 L335.7 74.0 L335.5 81.3 L333.1 76.6 L332.6 82.6 L330.3 79.3 L329.2 82.9 L327.0 82.0 Z" fill="#5c2265"/>
<path d="M327.0 82.0 L326.8 80.2 L326.8 78.6 L327.0 76.9 L327.2 75.4 L327.4 73.8 L327.8 72.3 L328.2 70.9 L328.7 69.5 L329.2 68.1 L329.8 66.8 L330.5 65.5 L331.2 64.2 L332.1 63.0 L332.8 61.8 L332.8 61.8 L332.9 64.1 L332.6 64.6 L333.3 69.4 L332.3 67.5 L333.2 73.7 L331.7 70.3 L332.7 77.1 L330.9 73.2 L331.7 79.7 L329.9 76.1 L330.3 81.6 L328.7 79.1 L328.4 82.5 L327.0 82.0 Z" fill="#4b1b57"/>
<path d="M327.0 82.0 L327.4 80.3 L327.5 78.6 L327.6 77.0 L327.5 75.4 L327.4 73.8 L327.2 72.3 L327.0 70.8 L326.7 69.4 L326.3 67.9 L325.8 66.5 L325.3 65.2 L324.7 63.9 L323.9 62.6 L323.4 61.3 L323.4 61.3 L323.1 63.6 L323.2 64.1 L322.4 68.8 L323.3 67.0 L322.1 73.1 L323.5 69.9 L322.4 76.6 L324.0 72.9 L323.1 79.3 L324.7 75.9 L324.2 81.2 L325.7 78.9 L325.7 82.3 L327.0 82.0 Z" fill="#5c2265"/>
<path d="M327.0 82.0 L326.4 79.8 L325.6 77.8 L324.7 75.9 L323.8 74.2 L322.7 72.6 L321.7 71.2 L320.5 69.9 L319.4 68.7 L318.1 67.7 L316.9 66.8 L315.6 66.1 L314.3 65.6 L312.9 65.3 L311.7 65.0 L311.7 65.0 L312.4 66.9 L313.3 66.8 L313.5 72.0 L315.0 68.9 L315.0 75.8 L316.8 71.1 L316.7 78.6 L318.9 73.5 L319.0 80.8 L321.3 76.1 L321.7 82.2 L323.9 79.0 L324.9 82.7 L327.0 82.0 Z" fill="#5c2265"/>
<path d="M327.0 82.0 L325.5 79.8 L323.8 78.1 L321.9 76.6 L320.0 75.3 L318.1 74.3 L316.1 73.6 L314.0 73.1 L312.0 73.0 L310.0 73.1 L308.1 73.6 L306.3 74.3 L304.6 75.3 L303.1 76.7 L301.6 77.9 L301.6 77.9 L303.5 78.5 L305.2 76.9 L307.2 81.4 L308.6 76.6 L310.3 83.3 L311.8 76.7 L313.2 84.4 L315.1 77.3 L316.3 84.8 L318.7 78.4 L320.0 84.5 L322.6 80.0 L324.3 83.6 L327.0 82.0 Z" fill="#4b1b57"/>
<path d="M327.0 82.0 L325.1 80.4 L323.1 79.4 L320.9 78.7 L318.6 78.5 L316.3 78.7 L314.0 79.2 L311.8 80.2 L309.7 81.5 L307.8 83.2 L305.9 85.2 L304.3 87.5 L302.8 90.2 L301.5 93.1 L300.1 96.1 L300.1 96.1 L302.3 94.6 L304.2 91.2 L307.0 93.5 L308.1 87.4 L310.9 92.2 L311.8 84.7 L314.4 90.9 L315.4 82.9 L317.4 89.3 L318.9 81.8 L320.6 87.1 L322.6 81.6 L324.5 84.4 L327.0 82.0 Z" fill="#5c2265"/>
<path d="M327.0 82.0 L325.4 81.1 L323.6 80.9 L321.7 81.1 L319.8 81.8 L317.9 83.0 L316.2 84.6 L314.6 86.5 L313.1 88.8 L311.8 91.4 L310.5 94.3 L309.4 97.6 L308.4 101.2 L307.6 105.1 L306.6 109.2 L306.6 109.2 L308.4 106.3 L309.9 101.7 L312.4 102.3 L313.1 95.5 L315.8 98.4 L316.1 90.6 L318.7 94.9 L318.9 87.0 L321.1 91.8 L321.5 84.4 L323.2 88.6 L324.0 82.9 L325.4 84.9 L327.0 82.0 Z" fill="#5c2265"/>
<path d="M327.0 82.0 L328.6 81.1 L330.4 80.9 L332.3 81.1 L334.2 81.8 L336.1 83.0 L337.8 84.6 L339.4 86.5 L340.9 88.8 L342.2 91.4 L343.5 94.3 L344.6 97.6 L345.6 101.2 L346.4 105.1 L347.4 109.2 L347.4 109.2 L345.6 106.3 L344.1 101.7 L341.6 102.3 L340.9 95.5 L338.2 98.4 L337.9 90.6 L335.3 94.9 L335.1 87.0 L332.9 91.8 L332.5 84.4 L330.8 88.6 L330.0 82.9 L328.6 84.9 L327.0 82.0 Z" fill="#4b1b57"/>
<path d="M327.0 82.0 L328.6 80.4 L330.4 79.3 L332.5 78.6 L334.6 78.4 L336.7 78.7 L338.8 79.4 L340.8 80.6 L342.7 82.1 L344.4 84.0 L346.0 86.3 L347.4 88.8 L348.7 91.7 L349.7 94.9 L350.9 98.3 L350.9 98.3 L348.9 96.4 L347.2 92.6 L344.5 94.5 L343.6 88.2 L340.8 92.6 L340.2 85.0 L337.7 91.0 L337.1 82.9 L335.2 89.2 L334.2 81.8 L332.7 87.0 L330.9 81.5 L329.3 84.3 L327.0 82.0 Z" fill="#5c2265"/>
<path d="M327.0 82.0 L326.5 80.8 L326.2 79.6 L326.0 78.5 L325.8 77.4 L325.7 76.2 L325.7 75.2 L325.7 74.1 L325.8 73.0 L325.9 72.0 L326.1 70.9 L326.4 69.9 L326.8 68.9 L327.2 68.0 L327.5 67.0 L327.5 67.0 L327.9 68.7 L327.9 69.0 L328.8 72.6 L328.3 71.0 L329.4 75.7 L328.4 73.1 L329.5 78.2 L328.4 75.2 L329.3 80.2 L328.1 77.4 L328.8 81.6 L327.7 79.7 L327.9 82.3 L327.0 82.0 Z" fill="#5c2265"/>
<path d="M327.0 82.0 L326.0 81.7 L324.9 82.1 L323.8 82.9 L322.9 84.0 L322.1 85.4 L321.3 87.1 L320.6 89.1 L320.1 91.3 L319.6 93.8 L319.2 96.6 L318.9 99.6 L318.7 102.9 L318.6 106.5 L318.4 110.3 L318.4 110.3 L319.4 107.4 L320.1 103.2 L321.8 103.3 L321.7 97.1 L323.7 99.2 L323.2 92.1 L325.1 95.4 L324.4 88.2 L326.1 91.8 L325.4 85.3 L326.7 88.5 L326.2 83.4 L326.9 84.9 L327.0 82.0 Z" fill="#4b1b57"/>
<path d="M327.0 82.0 L328.0 81.7 L329.1 82.1 L330.2 82.9 L331.1 84.0 L331.9 85.4 L332.7 87.1 L333.4 89.1 L333.9 91.3 L334.4 93.8 L334.8 96.6 L335.1 99.6 L335.3 102.9 L335.4 106.5 L335.6 110.3 L335.6 110.3 L334.6 107.4 L333.9 103.2 L332.2 103.3 L332.3 97.1 L330.3 99.2 L330.8 92.1 L328.9 95.4 L329.6 88.2 L327.9 91.8 L328.6 85.3 L327.3 88.5 L327.8 83.4 L327.1 84.9 L327.0 82.0 Z" fill="#5c2265"/>
<path d="M327.0 82.0 L327.7 80.5 L328.6 79.3 L329.5 78.2 L330.5 77.2 L331.5 76.3 L332.5 75.5 L333.6 74.9 L334.7 74.4 L335.8 74.0 L336.9 73.7 L338.0 73.6 L339.1 73.6 L340.2 73.8 L341.2 73.9 L341.2 73.9 L340.4 75.3 L339.5 74.8 L338.9 79.0 L337.8 75.9 L337.4 81.4 L336.0 76.9 L335.7 83.1 L334.1 78.1 L333.7 83.9 L332.0 79.3 L331.4 84.0 L329.7 80.6 L328.7 83.3 L327.0 82.0 Z" fill="#5c2265"/>
<path d="M327.0 82.0 L326.4 80.5 L325.5 79.2 L324.6 78.0 L323.7 77.0 L322.7 76.1 L321.7 75.3 L320.6 74.7 L319.5 74.2 L318.4 73.9 L317.3 73.7 L316.2 73.6 L315.1 73.8 L314.1 74.1 L313.2 74.4 L313.2 74.4 L314.1 75.6 L314.9 75.1 L315.6 79.1 L316.6 75.9 L317.0 81.4 L318.3 76.8 L318.6 82.9 L320.1 77.9 L320.4 83.7 L322.1 79.1 L322.6 83.8 L324.4 80.5 L325.3 83.2 L327.0 82.0 Z" fill="#4b1b57"/>
<path d="M327.0 82.0 L327.6 82.2 L328.0 82.6 L328.3 83.3 L328.5 84.2 L328.7 85.3 L328.7 86.7 L328.7 88.3 L328.7 90.1 L328.6 92.2 L328.4 94.5 L328.1 97.0 L327.8 99.8 L327.3 102.8 L327.0 106.0 L327.0 106.0 L326.6 103.5 L326.5 99.8 L325.4 99.9 L326.0 94.5 L324.8 96.2 L325.8 90.1 L324.5 92.8 L325.8 86.7 L324.6 89.6 L325.9 84.2 L325.2 86.6 L326.3 82.6 L326.1 83.8 L327.0 82.0 Z" fill="#5c2265"/>
<!-- shoreline bushes near palms -->
<path d="M164 134 C170 128 176 130 180 136 C186 132 190 134 192 139 L166 139 Z" fill="#5a2163"/>
<path d="M326 140 C330 134 336 133 340 137 C344 133 350 134 352 140 Z" fill="#4a1b55"/>
</svg>
<!-- ILLUS-END --></div>
  <h1>生成クレジット</h1>
  <p>ほとんどの標準的な生成機能は、無制限のアクセスが付与されたプランをお持ちでない<br><span style="word-spacing:2.2px">限り、生成ごとに 1 クレジット消費し、3 つのベクターが出力されます。生成クレ</span><br>ジットの残高やプランの詳細は、アカウントメニューからいつでもご確認いただけま<br>す。</p>
  <a>生成クレジットについての詳細</a>
  <div class="btn" style="left:305px;top:370px;width:93px;border:2px solid #e4e4e4;color:#fff;line-height:27px;font-size:12px;">キャンセル</div>
  <div class="abs" style="left:401px;top:366px;width:105px;height:34px;border:2px solid #e0242c;"></div>
  <div class="btn" style="left:407px;top:370px;width:95px;background:#1473e6;color:#fff;line-height:29.5px;font-size:12.5px;">OK</div>
</div>

</div>
</body>
</html>
